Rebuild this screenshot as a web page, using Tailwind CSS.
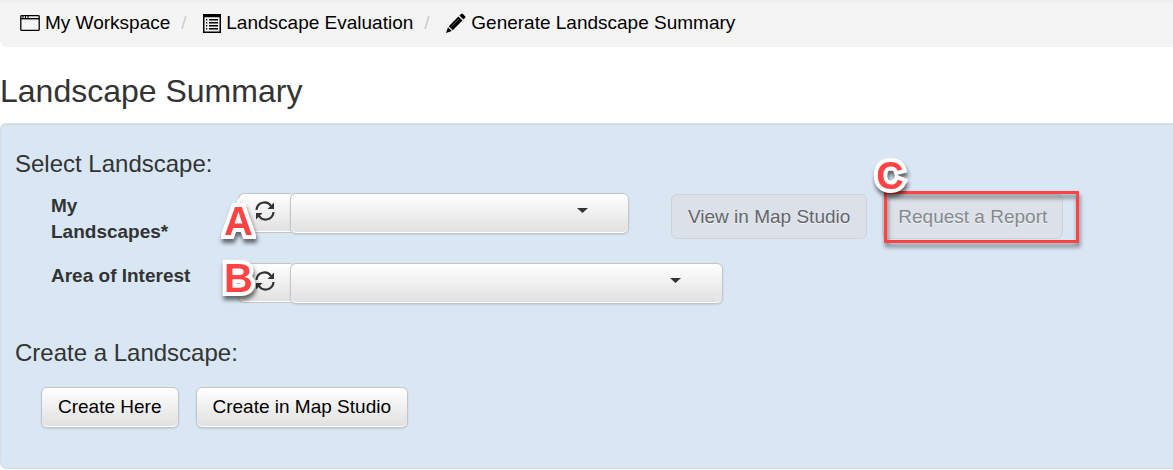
<!DOCTYPE html>
<html lang="en">
<head>
<meta charset="utf-8">
<meta name="viewport" content="width=device-width, initial-scale=1">
<title>Landscape Summary</title>
<script src="https://cdn.jsdelivr.net/npm/@tailwindcss/browser@4"></script>
</head>
<body class="overflow-x-hidden bg-white font-['Liberation_Sans',Arial,sans-serif] text-[19px] leading-[26px] text-[#333]">
<nav aria-label="Breadcrumb" class="rounded-bl-md bg-linear-to-b from-[#ececec] to-[#f4f4f4] to-[4px] pt-2.5 pb-[11px] pl-5">
  <ol class="flex items-center text-black">
    <li><a href="#" class="flex items-center gap-[5px]">
      <svg class="h-4 w-5" viewBox="0 0 20 16" fill="none" stroke="#000"><rect x="0.8" y="0.6" width="18.4" height="14.8" rx="1" stroke-width="1.3"/><path d="M1 3.7h18" stroke-width="1.4"/><path d="M3 1v2M5.5 1v2M8 1v2" stroke-width="1"/></svg>My Workspace</a></li>
    <li aria-hidden="true" class="w-[33px] pl-[11px] text-[#ccc]">/</li>
    <li><a href="#" class="flex items-center gap-[5px]">
      <svg class="h-[19px] w-[18px]" viewBox="0 0 18 19"><path fill="#000" fill-rule="evenodd" d="M0 0h18v19H0zM1.5 3.2v14.3h15V3.2z"/><path stroke="#000" stroke-width="1.5" d="M3 5.7h1.3M3 8.7h1.3M3 11.7h1.3M3 14.7h1.3M6 5.7h9M6 8.7h9M6 11.7h9M6 14.7h9"/></svg>Landscape Evaluation</a></li>
    <li aria-hidden="true" class="w-[33px] pl-[11px] text-[#ccc]">/</li>
    <li><a href="#" class="flex items-center gap-[5px]">
      <svg class="h-5 w-5" viewBox="0 0 20 20"><path d="M0 20 2 14.200 5.800 18zM2.800 13.200 12.400 3.600 16.400 7.600 6.800 17.200zM13.400 2.600 15.400.8Q16 .3 16.700.8L19.300 3.400Q19.800 4 19.300 4.600L17.400 6.600z"/><path d="m5.300 13.600 7.600-7.600" stroke="#888" stroke-width=".7"/></svg>Generate Landscape Summary</a></li>
  </ol>
</nav>
<main>
  <h1 class="mt-6 mb-3 text-[32px] leading-10">Landscape Summary</h1>
  <div class="-mr-2 rounded-md border border-[#d9dce0] bg-[#d9e7f4] pt-6 pb-10 pl-3.5 shadow-[inset_0_1px_1px_#0000000d]">
    <h2 class="text-2xl leading-8">Select Landscape:</h2>
    <div class="mt-[13px] flex items-start pl-9">
      <label for="landscapes" class="w-[187px] shrink-0 pr-14 font-bold">My Landscapes*</label>
      <div class="relative flex shrink-0 items-start">
        <button type="button" aria-label="Refresh landscapes" class="flex h-10 w-[53px] items-center justify-center rounded-l-md border border-r-0 border-[#c4c4c4] bg-linear-to-b from-white to-[#e0e0e0] pb-1 shadow-[inset_0_-1px_#fff]">
          <svg class="h-5 w-5" viewBox="0 0 20 20" fill="none" stroke="#333" stroke-width="2.200"><path d="M1.500 9C2 1 12-1 16 5M18.500 11C18 19 8 21 4 15"/><path fill="#333" stroke="none" d="M19 1.500v6.500h-6.500zM1 18.500v-6.500h6.500z"/></svg>
        </button>
        <div class="relative -ml-px">
          <select id="landscapes" class="block h-[41px] w-[339px] appearance-none rounded-md border border-[#c4c4c4] bg-linear-to-b from-white to-[#e0e0e0] shadow-[inset_0_-1px_#fff,0_1px_2px_#0000001a]"><option></option></select>
          <svg class="pointer-events-none absolute top-[15px] right-[41px] h-[5px] w-[11px]" viewBox="0 0 11 5"><path fill="#333" d="M0 0h11L5.500 5z"/></svg>
        </div>
        <span class="absolute -left-[14px] top-[5px] text-[40px] leading-[46px] font-bold text-[#ff4343] drop-shadow-[1px_4px_2px_#00000090] [-webkit-text-stroke:8px_white] [paint-order:stroke_fill] [stroke-linejoin:round]">A</span>
      </div>
      <button type="button" disabled class="mt-px ml-[42px] h-[45px] shrink-0 rounded-md border border-[#cfd2d5] bg-[#dce0e8] px-4 text-[#62666b] [text-shadow:0_1px_1px_#ffffffbf]">View in Map Studio</button>
      <div class="relative mt-px ml-[15px] shrink-0">
        <button type="button" disabled class="block h-[45px] rounded-md border border-[#cfd2d5] bg-[#dce0e8] px-[15px] text-[#85898e] [text-shadow:0_1px_1px_#ffffffbf]">Request a Report</button>
        <div class="pointer-events-none absolute -top-[3px] -right-4 -bottom-1 left-0.5 border-3 border-[#ff4343] drop-shadow-[1px_4px_2px_#00000080]"></div>
        <span class="absolute -top-[41px] -left-[6px] text-[38px] leading-[46px] font-bold text-[#ff4343] drop-shadow-[1px_4px_2px_#00000090] [-webkit-text-stroke:8px_white] [paint-order:stroke_fill] [stroke-linejoin:round]">C</span>
      </div>
    </div>
    <div class="mt-[18px] flex items-start pl-9">
      <label for="area" class="w-[187px] shrink-0 font-bold">Area of Interest</label>
      <div class="relative flex shrink-0 items-start">
        <button type="button" aria-label="Refresh areas" class="flex h-10 w-[53px] items-center justify-center rounded-l-md border border-r-0 border-[#c4c4c4] bg-linear-to-b from-white to-[#e0e0e0] pb-1 shadow-[inset_0_-1px_#fff]">
          <svg class="h-5 w-5" viewBox="0 0 20 20" fill="none" stroke="#333" stroke-width="2.200"><path d="M1.500 9C2 1 12-1 16 5M18.500 11C18 19 8 21 4 15"/><path fill="#333" stroke="none" d="M19 1.500v6.500h-6.500zM1 18.500v-6.500h6.500z"/></svg>
        </button>
        <div class="relative -ml-px">
          <select id="area" class="block h-[41px] w-[433px] appearance-none rounded-md border border-[#c4c4c4] bg-linear-to-b from-white to-[#e0e0e0] shadow-[inset_0_-1px_#fff,0_1px_2px_#0000001a]"><option></option></select>
          <svg class="pointer-events-none absolute top-[15px] right-[42px] h-[5px] w-[11px]" viewBox="0 0 11 5"><path fill="#333" d="M0 0h11L5.500 5z"/></svg>
        </div>
        <span class="absolute -left-[14px] -top-[8px] text-[40px] leading-[46px] font-bold text-[#ff4343] drop-shadow-[1px_4px_2px_#00000090] [-webkit-text-stroke:8px_white] [paint-order:stroke_fill] [stroke-linejoin:round]">B</span>
      </div>
    </div>
    <h2 class="mt-[33px] text-2xl leading-8">Create a Landscape:</h2>
    <div class="mt-[18px] flex gap-[17px] pl-[26px] text-black">
      <button type="button" class="h-[41px] rounded-md border border-[#c4c4c4] bg-linear-to-b from-white to-[#e0e0e0] px-4 pb-0.5 shadow-[inset_0_-1px_#fff,0_1px_2px_#0000001a]">Create Here</button>
      <button type="button" class="h-[41px] rounded-md border border-[#c4c4c4] bg-linear-to-b from-white to-[#e0e0e0] px-4 pb-0.5 shadow-[inset_0_-1px_#fff,0_1px_2px_#0000001a]">Create in Map Studio</button>
    </div>
  </div>
</main>
</body>
</html>
